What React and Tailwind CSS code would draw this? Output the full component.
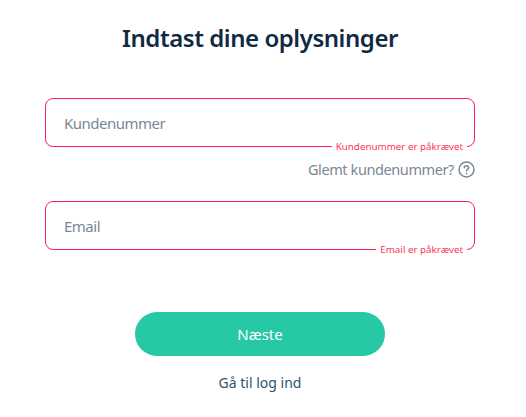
import { useState } from 'react'

const font = "font-['Noto_Sans','Lato',sans-serif]"

const Field = ({ placeholder, error, value, onChange }) => (
  <div className="relative">
    <input
      value={value}
      onChange={onChange}
      placeholder={placeholder}
      className="block h-[49px] w-full rounded-[8px] border border-[#ff1f5a] bg-white px-[18px] text-[15px] tracking-[-0.5px] text-[#102a43] outline-none placeholder:text-[#7b8794]"
    />
    <span className="absolute right-[8px] top-[43px] bg-white px-[4px] text-[9.8px] leading-[12px] text-[#ff3358]">
      {error}
    </span>
  </div>
)

const HelpIcon = () => (
  <svg width="17" height="17" viewBox="0 0 17 17" fill="none" stroke="#7b8794" strokeWidth="1.5" aria-hidden>
    <circle cx="8.5" cy="8.5" r="7.5" />
    <path d="M6.3 6.8c0-1.3 1-2.1 2.2-2.1s2.2.8 2.2 1.9c0 1.7-2.2 1.7-2.2 3.4" strokeLinecap="round" />
    <circle cx="8.5" cy="12.6" r="0.9" fill="#7b8794" stroke="none" />
  </svg>
)

const App = () => {
  const [customer, setCustomer] = useState('')
  const [email, setEmail] = useState('')

  return (
    <div className={`${font} h-[417px] w-[526px] overflow-hidden bg-white pl-[45px] pr-[51px] pt-[21px]`}>
      <h1 className="text-center text-[24px] font-semibold leading-[34px] tracking-[-0.45px] text-[#102a43]">
        Indtast dine oplysninger
      </h1>

      <form className="mt-[43px]" onSubmit={(e) => e.preventDefault()}>
        <Field
          placeholder="Kundenummer"
          error="Kundenummer er påkrævet"
          value={customer}
          onChange={(e) => setCustomer(e.target.value)}
        />

        <a href="#" className="mt-[12px] flex items-center justify-end gap-[4px] text-[14.5px] leading-[20px] tracking-[-0.4px] text-[#7b8794]">
          Glemt kundenummer?
          <HelpIcon />
        </a>

        <div className="mt-[22px]">
          <Field
            placeholder="Email"
            error="Email er påkrævet"
            value={email}
            onChange={(e) => setEmail(e.target.value)}
          />
        </div>

        <button className="mx-auto mt-[62px] block h-[44px] w-[250px] rounded-full bg-[#27c9a5] text-[15px] text-white">
          Næste
        </button>

        <a href="#" className="mt-[17px] block text-center text-[14px] leading-[20px] text-[#1f5673]">
          Gå til log ind
        </a>
      </form>
    </div>
  )
}

export default App
